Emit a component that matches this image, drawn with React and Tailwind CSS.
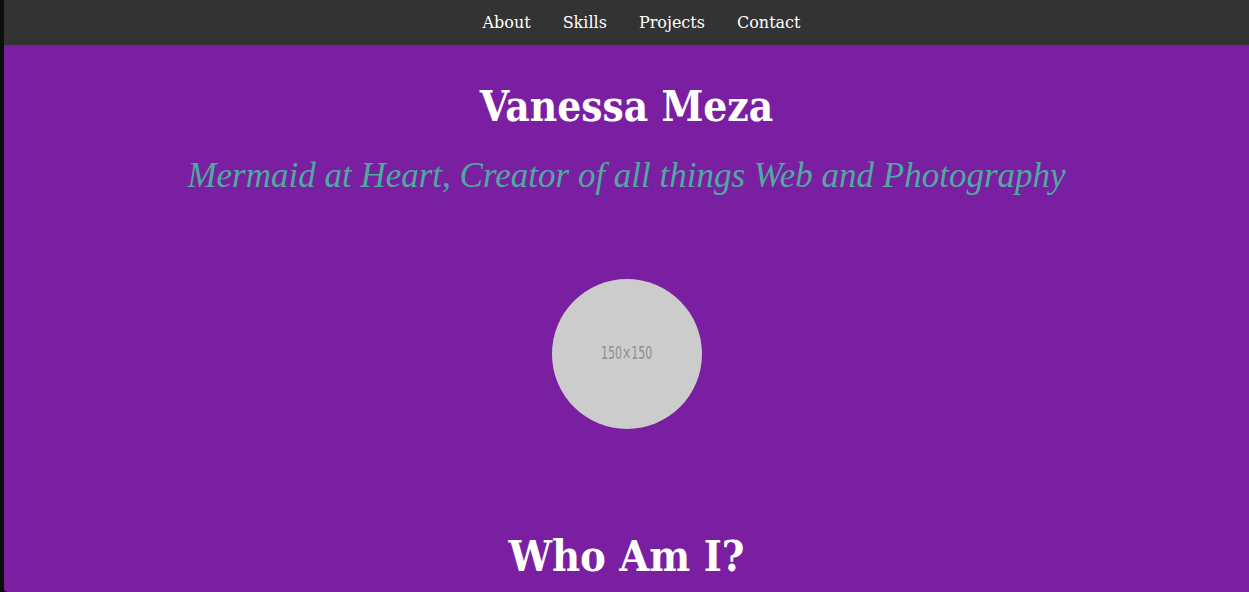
import React from 'react';

const links = ['About', 'Skills', 'Projects', 'Contact'];

const App = () => {
    return (
        <div className="flex h-[592px] overflow-hidden bg-[#0a0f0a]">
            <div className="ml-[4px] flex flex-1 flex-col overflow-hidden rounded-bl-[4px] bg-[#7b1fa2]">
                <nav className="flex h-[45px] shrink-0 items-center justify-center gap-[32px] bg-[#333333] pl-[30px]">
                    {links.map((l) => (
                        <a key={l} href="#" className="text-[16px] text-white" style={{ fontFamily: '"DejaVu Serif", serif' }}>
                            {l}
                        </a>
                    ))}
                </nav>

                <main className="flex flex-col items-center text-center" style={{ fontFamily: '"DejaVu Serif Condensed", "DejaVu Serif", serif' }}>
                    <h1 className="mt-[32px] text-[42px] font-bold leading-[60px] text-white">Vanessa Meza</h1>
                    <h2 className="mt-[19px] text-[35px] italic leading-[40px] text-[#4fa9a0]" style={{ fontFamily: '"Liberation Serif", serif' }}>
                        Mermaid at Heart, Creator of all things Web and Photography
                    </h2>

                    <div className="mt-[83px] flex h-[150px] w-[150px] items-center justify-center rounded-full bg-[#cccccc]">
                        <span className="inline-block scale-x-[0.72] text-[17px] text-[#8f8f8f]" style={{ fontFamily: '"DejaVu Sans Condensed", sans-serif' }}>
                            150×150
                        </span>
                    </div>

                    <h2 className="mt-[97px] text-[43px] font-bold leading-[60px] text-white">Who Am I?</h2>
                </main>
            </div>
        </div>
    );
};

export default App;
